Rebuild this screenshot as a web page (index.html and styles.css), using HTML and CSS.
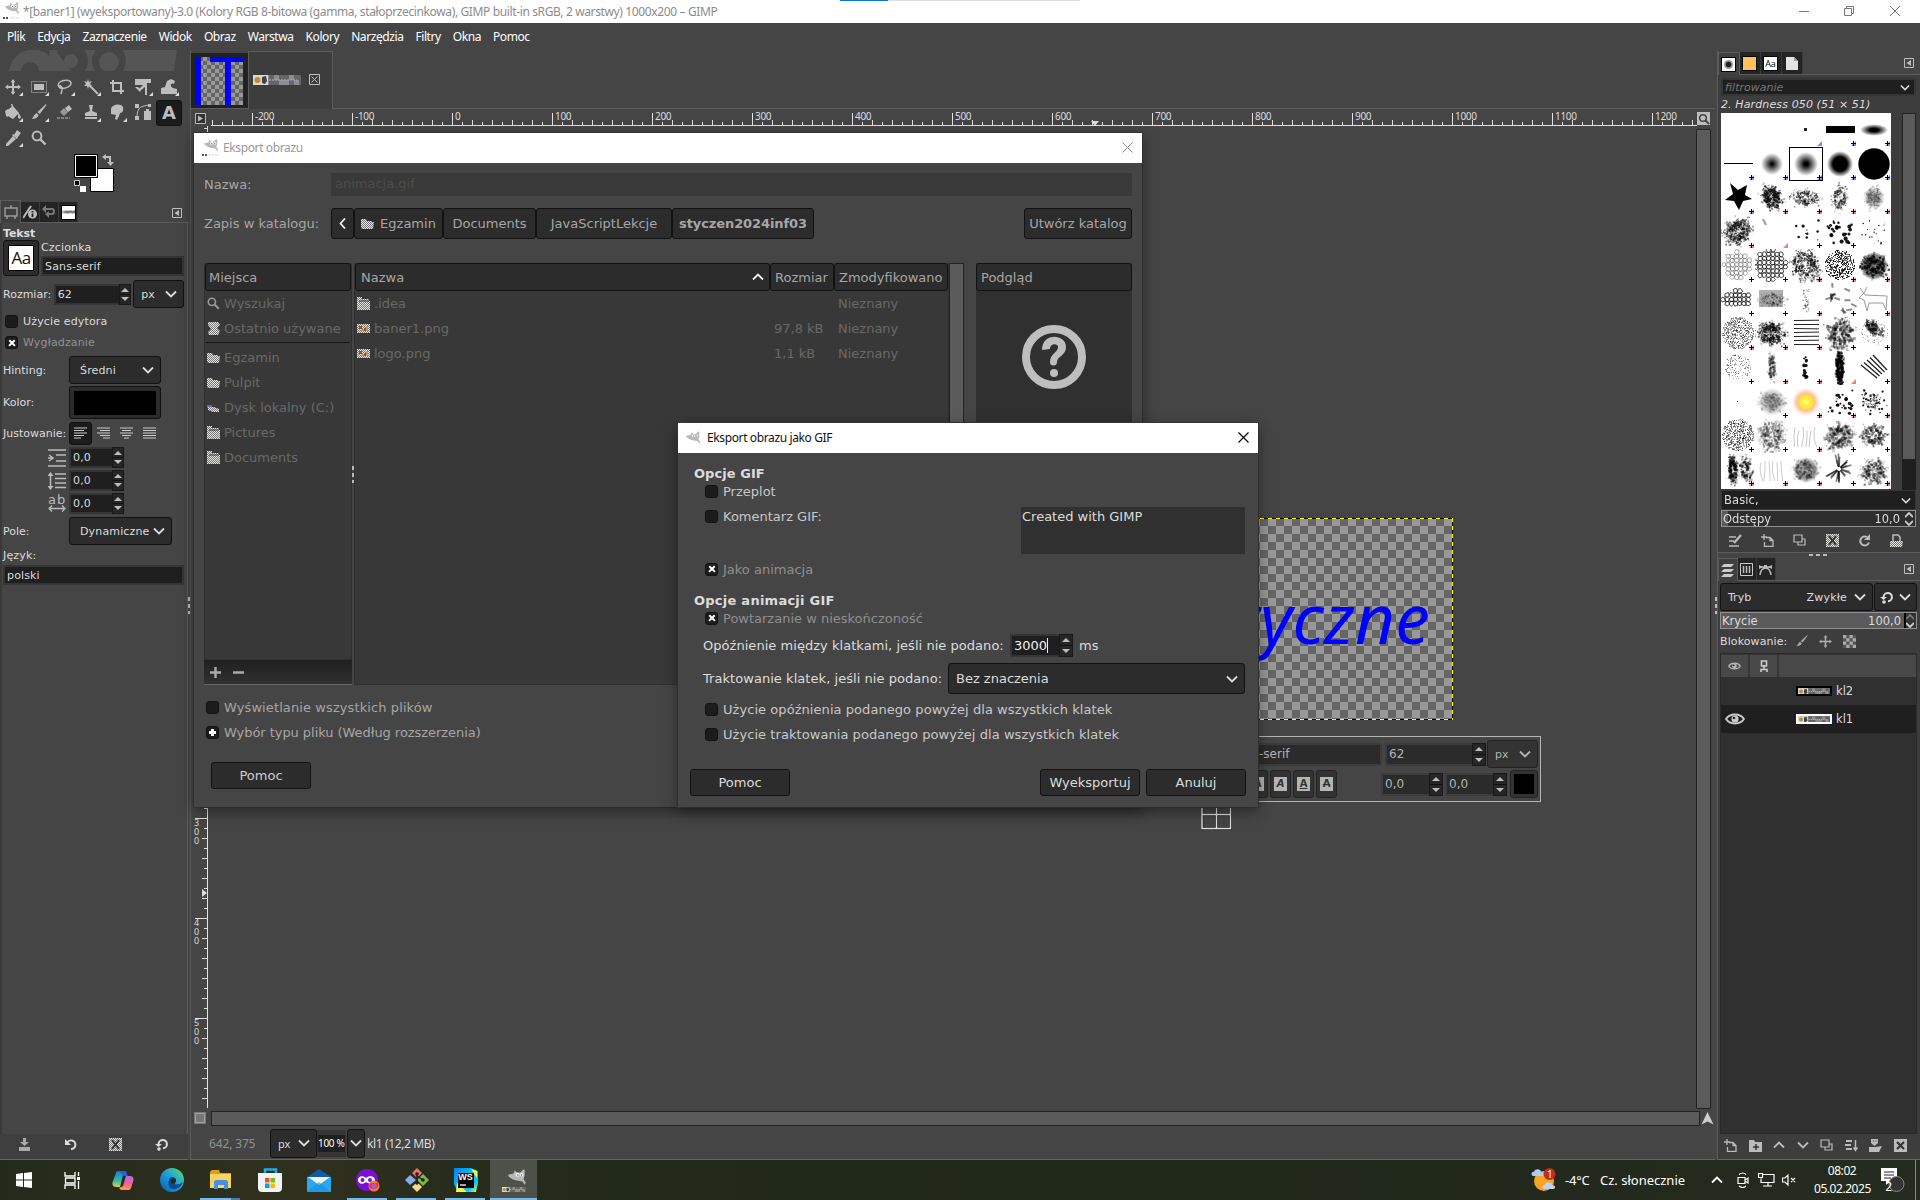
FILE: index.html
```html
<!DOCTYPE html>
<html lang="pl">
<head>
<meta charset="utf-8">
<title>GIMP</title>
<link rel="stylesheet" href="styles.css">
</head>
<body>
<svg class="defs" aria-hidden="true">
  <defs>
    <pattern id="dither" width="2" height="2" patternUnits="userSpaceOnUse"><rect width="2" height="2" fill="#777"/><rect width="1" height="1" fill="#e4e4e0"/><rect x="1" y="1" width="1" height="1" fill="#e4e4e0"/></pattern>
    <linearGradient id="gEdge" x1="0" y1="1" x2="1" y2="0"><stop offset="0" stop-color="#0c59a4"/><stop offset=".5" stop-color="#1b9de2"/><stop offset="1" stop-color="#5fe05a"/></linearGradient>
    <linearGradient id="gCopA" x1="0" y1="0" x2="0" y2="1"><stop offset="0" stop-color="#1a7be8"/><stop offset=".6" stop-color="#36b7a0"/><stop offset="1" stop-color="#d8d23c"/></linearGradient>
    <linearGradient id="gCopB" x1="0" y1="0" x2="0" y2="1"><stop offset="0" stop-color="#b668ee"/><stop offset=".55" stop-color="#f06292"/><stop offset="1" stop-color="#f8a04a"/></linearGradient>
    <linearGradient id="gWs" x1="0" y1="0" x2="1" y2="1"><stop offset="0" stop-color="#087cfa"/><stop offset=".5" stop-color="#00c8e8"/><stop offset=".75" stop-color="#07c3f2"/><stop offset="1" stop-color="#fcf84a"/></linearGradient>
  </defs>
  <symbol id="wilber" viewBox="0 0 18 15"><path fill="#b9b9b9" d="M0 5 5 4 6 1 8 3 11 3 14 0 15 1 15 6 14 9 16 12 15 14 13 11 7 10 4 9 1 7Z"/><circle cx="8.5" cy="5" r="1.7" fill="#fff"/><circle cx="12.3" cy="5" r="1.5" fill="#fff"/><circle cx="8.8" cy="5.2" r=".7" fill="#555"/><circle cx="12.2" cy="5.2" r=".7" fill="#555"/></symbol>
  <symbol id="chev" viewBox="0 0 12 8"><path d="M1 1.5 6 6.5 11 1.5" fill="none" stroke="currentColor" stroke-width="1.8"/></symbol>
  <symbol id="chevup" viewBox="0 0 12 8"><path d="M1 6.5 6 1.5 11 6.5" fill="none" stroke="currentColor" stroke-width="1.8"/></symbol>
  <symbol id="dockmenu" viewBox="0 0 10 10"><path d="M.5.5h9v9h-9z" fill="none" stroke="#bdbdbd"/><path d="M7 2v6L2.5 5z" fill="#bdbdbd"/></symbol>
  <symbol id="folder" viewBox="0 0 13 12"><path d="M0 1h5l1 2h5v1h2l-1 7H1L0 9z" fill="url(#dither)"/></symbol>
  <symbol id="folder2" viewBox="0 0 13 13"><path d="M0 0h5v2h7v2h1v9H0z" fill="url(#dither)"/><path d="M2 4h10" stroke="#3a3a3a"/></symbol>
  <symbol id="imgfile" viewBox="0 0 13 10"><path d="M0 0h13v9H0z" fill="url(#dither)"/><path d="M2 2h3v3H2zM7 4h3v3H7z" fill="#a34b32"/><path d="M9 2h2v5H9zM4 5h3v2H4z" fill="#c49a4a"/></symbol>
  <symbol id="lens" viewBox="0 0 16 16"><circle cx="6" cy="6" r="4.4" fill="none" stroke="currentColor" stroke-width="2"/><path d="m9.5 9.5 5 5" stroke="currentColor" stroke-width="2.4"/></symbol>
  <symbol id="move" viewBox="0 0 16 16"><path d="M8 0 5.6 3.2H7V7H3.2V5.6L0 8l3.2 2.4V9H7v3.8H5.6L8 16l2.4-3.2H9V9h3.8v1.4L16 8l-3.2-2.4V7H9V3.2h1.4z" fill="currentColor"/></symbol>
  <symbol id="brush" viewBox="0 0 16 16"><path d="M15 0 6.5 8l2.2 2L15.5 1zM5.6 9l2 2c-1 3-4 4-7 4 2-1.5 2.5-5 5-6z" fill="currentColor"/></symbol>
  <symbol id="newdoc" viewBox="0 0 13 13"><path d="M5 3.5h4l3 3v6H3.5V8M3 0v6M0 3h6M9 3.5v3h3" fill="none" stroke="currentColor" stroke-width="1.3"/></symbol>
  <symbol id="dup" viewBox="0 0 13 13"><path d="M1 1h8v7H1zM5 8v3h7V5H9" fill="none" stroke="currentColor" stroke-width="1.2"/></symbol>
  <symbol id="xbox" viewBox="0 0 13 13"><path d="M0 0h13v13H0z" fill="currentColor"/><path d="m3 3 7 7m0-7-7 7" stroke="#333" stroke-width="2.2"/></symbol>
  <symbol id="xdith" viewBox="0 0 13 13"><path d="M0 0h13v13H0z" fill="url(#dither)"/><path d="m3 2 7 9m0-9-7 9" stroke="#333" stroke-width="2"/></symbol>
  <symbol id="undo" viewBox="0 0 13 13"><path d="M3 5.5A4.300 4.300 0 1 1 7 11" fill="none" stroke="currentColor" stroke-width="2"/><path d="M1 1v6h6z" fill="currentColor"/></symbol>
  <symbol id="resetc" viewBox="0 0 13 13"><path d="M3.5 6A4.200 4.200 0 1 1 8 10.300" fill="none" stroke="currentColor" stroke-width="2"/><path d="M0 6h7L3.5 9z" fill="currentColor"/><circle cx="4" cy="11" r="1.8" fill="currentColor"/></symbol>
  <symbol id="eye" viewBox="0 0 20 12"><path d="M1 6C5 0 15 0 19 6 15 12 5 12 1 6z" fill="none" stroke="currentColor" stroke-width="1.8"/><circle cx="10" cy="6" r="3.6" fill="currentColor"/><circle cx="9" cy="5" r="1.3" fill="#222"/></symbol>
  <symbol id="thumb" viewBox="0 0 48 10"><path d="M0 0h48v10H0z" fill="#8d8d8d"/><path d="M16 0h5v5h5v5h5V5h-5V0h10v5h5v5h5V5h-5V0h7v5h0v5h-12V5h-5v5H16z" fill="#666"/><path d="M0 0h15v10H0z" fill="#dcd8d2"/><circle cx="4.5" cy="5" r="3" fill="#c58a2c"/><path d="m9 2 4-1 1 5-2 3-3-1z" fill="#3b4250"/><path d="M16 5h28" stroke="#b3aedb" stroke-width="1.2" stroke-dasharray="2 1"/></symbol>
</svg>

<header class="titlebar">
  <svg class="wil" viewBox="0 0 18 19"><use href="#wilber" width="16" height="13" x="2"/><path d="M0 15h2v2H0zM3 15h2v2H3z" fill="#555"/><path d="M7 16h10" stroke="#c9c9ea" stroke-dasharray="2 1"/></svg>
  <span class="wintitle">*[baner1] (wyeksportowany)-3.0 (Kolory RGB 8-bitowa (gamma, stałoprzecinkowa), GIMP built-in sRGB, 2 warstwy) 1000x200 – GIMP</span>
  <span class="topstrip"></span>
  <svg class="winctl" viewBox="0 0 104 12"><g fill="none" stroke="#777"><path d="M0 6.500h10M45.500 3.500h7v7h-7zM47.500 3.500v-2h7v7h-2M91 1l10 10M101 1 91 11"/></g></svg>
</header>
<nav class="menubar"><span>Plik</span><span>Edycja</span><span>Zaznaczenie</span><span>Widok</span><span>Obraz</span><span>Warstwa</span><span>Kolory</span><span>Narzędzia</span><span>Filtry</span><span>Okna</span><span>Pomoc</span></nav>

<main class="work">
  <aside class="left">
    <svg class="deco" viewBox="0 0 170 21"><g fill="#555"><path d="M0 21C3-6 44-9 46 21H30C30 10 14 8 12 21z"/><path d="M42 0h126l-3 21H68z"/></g><circle cx="62" cy="11" r="17" fill="#454545"/><circle cx="62" cy="11" r="7" fill="#555"/><path d="M46 0h-6l2 21h20z" fill="#555"/><circle cx="100" cy="11" r="17" fill="#454545"/><circle cx="100" cy="12" r="10" fill="#555"/></svg>
    <div class="tools">
      <i><svg viewBox="0 0 16 16"><use href="#move"/></svg></i>
      <i><svg viewBox="0 0 16 16"><path d="M.5 2.500h15v11H.5z" fill="none" stroke="currentColor" stroke-dasharray="1 1"/><path d="M3 5h10v6H3z" fill="currentColor"/></svg></i>
      <i><svg viewBox="0 0 16 16"><path d="M6 10C1 9 0 5 3 3c4-3 11-2 11 1 0 4-7 6-10 5-2-1-1-3 0-2 2 2 1 5 0 8" fill="none" stroke="currentColor" stroke-width="1.5"/></svg></i>
      <i><svg viewBox="0 0 16 16"><path d="m5 5 10 10" stroke="currentColor" stroke-width="2"/><path d="m5 0 1 3 3-1-2 3 2 2-3 0-1 3-1-3-3 0 2-2-2-3 3 1z" fill="currentColor"/></svg></i>
      <i class="nc"><svg viewBox="0 0 16 16"><path d="M4 1v11h11M1 4h11v11" fill="none" stroke="currentColor" stroke-width="2"/></svg></i>
      <i><svg viewBox="0 0 16 16"><path d="M0 0h16v4h-4v12h-2V8l-5 4-1-2 4-4H0zM0 8h3l3 3-1 2z" fill="currentColor"/></svg></i>
      <i><svg viewBox="0 0 16 16"><path d="M0 15V9l4-1 2-6 4-2 4 2-1 3c-4-2-4 3-1 4l4 1v5z" fill="currentColor"/></svg></i>
      <i><svg viewBox="0 0 16 16"><path d="m1 7 7-5 6 7-6 6-5-3zM13 8l3 5-1 2-2-1zM6 0h1.500l1 5H7zM0 7l3-2v8L1 12z" fill="currentColor"/></svg></i>
      <i><svg viewBox="0 0 16 16"><use href="#brush"/></svg></i>
      <i class="nc"><svg viewBox="0 0 16 16"><path d="m3 8 4-4 4 4-4 4z" fill="#999"/><path d="m8 4 4-3 3 4-4 3z" fill="currentColor"/><path d="M0 14h13" stroke="currentColor" stroke-dasharray="3 1"/></svg></i>
      <i><svg viewBox="0 0 16 16"><path d="M6 1h4l-1 6 5 2v3H2V9l5-2zM2 13h12v2H2z" fill="currentColor"/></svg></i>
      <i><svg viewBox="0 0 16 16"><path d="M2 5c1-5 10-6 12-2 1 4-1 6-3 6l-1 3-2 4-2-1 1-4-5-1z" fill="currentColor"/></svg></i>
      <i class="nc"><svg viewBox="0 0 16 16"><path d="M2 15C2 8 3 3 9 2l5-1" fill="none" stroke="currentColor"/><path d="M0 0h4v4H0zM0 12h4v4H0zM13 0h3v3h-3zM9 7h7v9H9zM11 5h3v2h-3z" fill="currentColor"/></svg></i>
      <i class="nc sel"><b>A</b></i>
      <i><svg viewBox="0 0 16 16"><path d="m12 0 4 3-4 5-3-3zM8 4l5 4-1 1-5-4zM8 6l3 3-8 7H1v-2z" fill="currentColor"/></svg></i>
      <i class="nc"><svg viewBox="0 0 16 16"><use href="#lens"/></svg></i>
    </div>
    <svg class="colors" viewBox="0 0 42 40"><path d="M16.500 14.500h23v23h-23z" fill="#fff" stroke="#000"/><path d="M.5.5h23v23H.5z" fill="#000" stroke="#000"/><path d="M1.500 1.500h21v21h-21z" fill="none" stroke="#fff"/><path d="M30 3h6v7" fill="none" stroke="#bdbdbd" stroke-width="2"/><path d="m28 3 4-3v6zM33 8h7l-3.500 4z" fill="#bdbdbd"/><path d="M6 32h6v6H6z" fill="#fff"/><path d="M.5 26.500h5v5h-5z" fill="#000" stroke="#ccc"/></svg>
    <div class="tabs ltabs">
      <i class="on"><svg width="14" height="14" viewBox="0 0 14 14"><path d="M1 3h12v8H1zM3 11v3M11 11v3M7 0v3" fill="none" stroke="#999" stroke-width="1.5"/></svg></i>
      <i><svg width="14" height="14" viewBox="0 0 14 14"><path d="m0 13 8-12" stroke="#bbb" stroke-width="2"/><circle cx="9.5" cy="9" r="4.5" fill="#bbb"/><path d="M9.500 6v1.500m0 1V12" stroke="#222" stroke-width="1.8"/></svg></i>
      <i><svg width="14" height="14" viewBox="0 0 14 14"><path d="M3 4h7q2 0 2 2.500T10 9H6" fill="none" stroke="#777" stroke-width="2"/><path d="m0 4 4-4v8zM3 9l4-3v7z" fill="#777"/></svg></i>
      <i><b class="sw"><svg width="13" height="4"><use href="#thumb" width="13" height="4"/></svg></b></i>
      <svg class="dm" width="10" height="10"><use href="#dockmenu"/></svg>
    </div>
    <section class="topts">
      <div class="tt">Tekst</div>
      <div class="fontrow"><span class="btn fontbtn"><b>Aa</b></span><div class="fcol"><span>Czcionka</span><span class="entry">Sans-serif</span></div></div>
      <div class="r r1"><span class="lab">Rozmiar:</span><span class="spin w78">62<i></i></span><span class="btn combo px">px<svg class="cv"><use href="#chev"/></svg></span></div>
      <div class="ck"><i></i>Użycie edytora</div>
      <div class="ck dim"><i class="x"></i>Wygładzanie</div>
      <div class="r r2"><span class="lab l66">Hinting:</span><span class="btn combo c92">Średni<svg class="cv"><use href="#chev"/></svg></span></div>
      <div class="r r3"><span class="lab l66">Kolor:</span><span class="btn colorbtn"><b></b></span></div>
      <div class="r r4"><span class="lab l66">Justowanie:</span>
        <span class="btn jb"><svg width="13" height="12"><path d="M0 1h13M0 3.500h10M0 6h13M0 8.500h10M0 11h7" stroke="#ccc"/></svg></span>
        <span class="ji"><svg width="13" height="12"><path d="M0 1h13M3 3.500h10M0 6h13M3 8.500h10M6 11h7" stroke="#ccc"/></svg><svg width="13" height="12"><path d="M0 1h13M2 3.500h9M0 6h13M2 8.500h9M4 11h5" stroke="#ccc"/></svg><svg width="13" height="12"><path d="M0 1h13M0 3.500h13M0 6h13M0 8.500h13M0 11h13" stroke="#ccc"/></svg></span></div>
      <div class="r r5"><svg class="pi" viewBox="0 0 18 18"><path d="M0 1h18M8 6h10M8 12h10M0 17h18" stroke="#bbb" stroke-width="1.5"/><path d="m1 6 4 3-4 3M0 9h4" fill="none" stroke="#bbb" stroke-width="1.5"/></svg><span class="spin w55">0,0<i></i></span></div>
      <div class="r r5"><svg class="pi" viewBox="0 0 18 18"><path d="M7 2h11M7 6.500h11M7 11h11M7 15.500h11M2.500 2v14" stroke="#bbb" stroke-width="1.5"/><path d="m2.500 0 3 4h-6zM2.500 18l3-4h-6z" fill="#bbb"/></svg><span class="spin w55">0,0<i></i></span></div>
      <div class="r r5"><span class="pi ab">ab<svg width="18" height="7"><path d="M2 3.500h14M4 .5l-3 3 3 3M14 .5l3 3-3 3" fill="none" stroke="#bbb" stroke-width="1.3"/></svg></span><span class="spin w55">0,0<i></i></span></div>
      <div class="r r6"><span class="lab l66">Pole:</span><span class="btn combo c103">Dynamiczne<svg class="cv"><use href="#chev"/></svg></span></div>
      <div class="lang">Język:</div>
      <span class="entry pol">polski</span>
    </section>
    <div class="lbar"><svg width="13" height="13"><path d="M5 0h3v4h3L6.500 8 2 4h3zM1 9h11v4H1z" fill="#aaa"/></svg><svg width="13" height="13"><use href="#undo"/></svg><svg width="13" height="13"><use href="#xdith"/></svg><svg width="13" height="13"><use href="#resetc"/></svg></div>
  </aside>
  <div class="gut"><i class="vdots"></i></div>

  <section class="center">
    <div class="imgtabs">
      <div class="itab"><svg width="48" height="48" viewBox="0 0 48 48"><defs><pattern id="chk" width="8" height="8" patternUnits="userSpaceOnUse"><path d="M4 0h4v4H4zM0 4h4v4H0z" fill="#666"/></pattern></defs><rect width="48" height="48" fill="#999"/><rect width="48" height="48" fill="url(#chk)"/><path d="M0 0h6v48H0zM15 0h33v5H36v43h-6V5H15z" fill="#00f"/></svg></div>
      <div class="itab act"><svg width="48" height="10"><use href="#thumb"/></svg><svg width="11" height="11"><path d="M.5.5h10v10H.5zM2.500 2.500l6 6m0-6-6 6" fill="none" stroke="#bdbdbd"/></svg></div>
    </div>
    <div class="rulerrow"><svg class="rcorner" width="11" height="11"><path d="M.5.5h10v10H.5z" fill="#333" stroke="#bbb"/><path d="M3 2.500v6l5-3z" fill="#bbb"/></svg>
      <div class="hruler"><span>-200</span><span>-100</span><span>0</span><span>100</span><span>200</span><span>300</span><span>400</span><span>500</span><span>600</span><span>700</span><span>800</span><span>900</span><span>1000</span><span>1100</span><span>1200</span><svg class="hmark" width="8" height="5"><path d="M0 0h8L4 5z" fill="#ddd"/></svg></div>
      <svg class="zi" viewBox="0 0 13 13"><path d="M0 0h13v13H0z" fill="#bdbdbd"/><circle cx="6" cy="6" r="3.3" fill="none" stroke="#444" stroke-width="1.5"/><path d="m8 8 4 4" stroke="#444" stroke-width="2"/></svg></div>
    <div class="viewrow">
      <div class="vruler"><span>3<br>0<br>0</span><span>4<br>0<br>0</span><span>5<br>0<br>0</span><svg class="vmark" width="5" height="8"><path d="M0 0v8l5-4z" fill="#ddd"/></svg></div>
      <div class="canvas">
        <div class="layer"><span>tyczne</span></div>
        <div class="textbox">
          <div class="tb1"><span class="entry te">-serif</span><span class="spin ts1">62<i></i></span><span class="btn combo tpx">px<svg class="cv"><use href="#chev"/></svg></span></div>
          <div class="tb2"><span class="btn ab1"><b>A</b></span><span class="btn ab1"><b class="it">A</b></span><span class="btn ab1"><b class="un">A</b></span><span class="btn ab1"><b class="st">A</b></span><span class="spin ts2 first">0,0<i></i></span><span class="spin ts2">0,0<i></i></span><span class="btn tcol"><b></b></span></div>
        </div>
        <svg class="cross" width="31" height="30"><path d="M1 0v28.500h28.500V0M15.500 0v28M1 14.500h28" fill="none" stroke="#222" stroke-width="3"/><path d="M1 0v28.500h28.500V0M15.500 0v28M1 14.500h28" fill="none" stroke="#e0e0e0" stroke-width="1.4"/></svg>
      </div>
      <div class="vscroll"><i></i></div>
    </div>
    <div class="hrow"><svg width="12" height="12"><path d="M0 0h12v12H0z" fill="#777"/><path d="M1.500 1.500h9v9h-9z" fill="none" stroke="#ccc" stroke-dasharray="1 1"/></svg><div class="hscroll"></div><svg class="nav" width="13" height="13"><path d="m6.500 0 6 12.500-6-3-6 3z" fill="#ccc"/></svg></div>
    <div class="status"><span class="pos">642, 375</span><span class="btn combo s1">px<svg class="cv"><use href="#chev"/></svg></span><span class="entry s2">100 %</span><span class="btn s3"><svg class="cv"><use href="#chev"/></svg></span><span class="s4">kl1 (12,2 MB)</span></div>
  </section>

  <div class="gut g2"><i class="vdots"></i></div>
  <aside class="right">
    <div class="tabs rtabs">
      <i class="on"><b class="sw"><svg width="13" height="13"><circle cx="6.5" cy="6.5" r="4.5" fill="#999"/><circle cx="6.5" cy="6.5" r="2.8" fill="#222"/></svg></b></i><i><b class="sw pat"></b></i><i><b class="sw aa">Aa</b></i><i><svg width="12" height="13"><path d="M0 0h8l4 4v9H0z" fill="#e4e4e4"/><path d="M8 0v4h4" fill="#999"/></svg></i>
      <svg class="dm" width="10" height="10"><use href="#dockmenu"/></svg>
    </div>
    <section class="brushes">
      <div class="entry filt"><em>filtrowanie</em><svg class="cv"><use href="#chev"/></svg></div>
      <div class="bname">2. Hardness 050 (51 × 51)</div>
      <div class="brow"><div class="grid" id="grid"></div><div class="bscroll"><i></i></div></div>
      <div class="entry basic">Basic,<svg class="cv"><use href="#chev"/></svg></div>
      <div class="slider od"><span>Odstępy</span><span class="v">10,0</span><svg width="8" height="14"><path d="m0 5 4-4 4 4M0 9l4 4 4-4" fill="none" stroke="#ccc" stroke-width="1.8"/></svg></div>
      <div class="bicons"><svg width="13" height="13"><path d="M0 3h7M0 7h5M0 12h10" stroke="#bbb" stroke-width="1.5"/><path d="m5 9 7-8" stroke="#bbb" stroke-width="2.4"/></svg><svg width="13" height="13"><use href="#newdoc"/></svg><svg width="13" height="13"><use href="#dup"/></svg><svg width="13" height="13"><use href="#xdith"/></svg><svg width="13" height="13"><path d="M11 8.500A4.500 4.500 0 1 1 9 3" fill="none" stroke="#bbb" stroke-width="2"/><path d="M12 0v6H6z" fill="#bbb"/></svg><svg width="13" height="13"><path d="M0 7h13l-1 6H0z" fill="url(#dither)"/><path d="M3 7V1h5l2 2v4" fill="none" stroke="#bbb" stroke-width="1.5"/></svg></div>
    </section>
    <div class="hdots"></div>
    <div class="tabs rtabs2">
      <i class="on"><svg width="13" height="13"><path d="M3 0h10l-3 3H0zM3 5h10l-3 3H0zM3 10h10l-3 3H0z" fill="#ccc"/></svg></i><i><svg width="13" height="13"><path d="M.5.5h12v12H.5z" fill="none" stroke="#ccc"/><path d="M3.500 3v7M6.500 3v7M9.500 3v7" stroke="#bbb" stroke-width="1.5"/></svg></i><i><svg width="13" height="13"><path d="M0 4h13M1 12Q2 5 6.500 5T12 12" fill="none" stroke="#bbb" stroke-width="1.5"/><path d="M0 2l4 2-4 2zM5 2h3v4H5zM13 2 9 4l4 2z" fill="#bbb"/></svg></i>
      <svg class="dm" width="10" height="10"><use href="#dockmenu"/></svg>
    </div>
    <section class="layers">
      <div class="mode"><span class="btn combo m1">Tryb<em>Zwykłe</em><svg class="cv"><use href="#chev"/></svg></span><span class="btn m2"><svg width="13" height="13"><use href="#resetc"/></svg><svg class="cv"><use href="#chev"/></svg></span></div>
      <div class="slider kr"><span>Krycie</span><span class="v">100,0</span><svg width="8" height="14"><path d="m0 5 4-4 4 4" fill="none" stroke="#777" stroke-width="1.8"/><path d="m0 9 4 4 4-4" fill="none" stroke="#ccc" stroke-width="1.8"/></svg></div>
      <div class="lock">Blokowanie:<svg width="12" height="12"><use href="#brush"/></svg><svg width="13" height="13"><use href="#move"/></svg><svg width="13" height="13" viewBox="0 0 12 12"><path d="M0 0h12v12H0z" fill="#aaa"/><path d="M3 0h3v3H3zM9 0h3v3H9zM0 3h3v3H0zM6 3h3v3H6zM3 6h3v3H3zM9 6h3v3H9zM0 9h3v3H0zM6 9h3v3H6z" fill="#555"/></svg></div>
      <div class="llist">
        <div class="lhead"><i><svg width="13" height="8"><use href="#eye"/></svg></i><i><svg width="8" height="13"><path d="M1.500 1h5v5h-5zM4 5v4M1 12V9.500h6V12" fill="none" stroke="#ccc" stroke-width="1.6"/></svg></i><i></i></div>
        <div class="lrow"><i></i><span class="th k"><svg width="32" height="6"><use href="#thumb" width="32" height="7"/></svg></span>kl2</div>
        <div class="lrow sel"><i><svg width="20" height="12"><use href="#eye"/></svg></i><span class="th"><svg width="32" height="6"><use href="#thumb" width="32" height="7"/></svg></span>kl1</div>
      </div>
      <div class="licons"><svg width="13" height="13"><use href="#newdoc"/></svg><svg width="13" height="13"><path d="M0 1h5l1 2h7v10H0z" fill="#bbb"/><path d="M7 5v6M4 8h6" stroke="#333" stroke-width="1.5"/></svg><svg width="12" height="8"><use href="#chevup"/></svg><svg width="12" height="8"><use href="#chev"/></svg><svg width="13" height="13"><use href="#dup"/></svg><svg width="13" height="13"><path d="M1 2h6M0 6h6M1 10h6" stroke="#bbb" stroke-width="2"/><path d="M10.500 1v10M8.500 8.500l2 3 2-3" fill="none" stroke="#bbb" stroke-width="1.5"/></svg><svg width="13" height="13"><path d="M2 0h7v4L5.500 7 2 4z" fill="#bbb"/><path d="M0 8h7l6-1-3 6H0z" fill="#bbb"/><path d="M4 2h1M6.500 2h1" stroke="#333"/></svg><svg width="13" height="13"><use href="#xbox"/></svg></div>
    </section>
  </aside>
</main>

<footer class="taskbar">
  <i class="t50"><svg width="16" height="16"><path d="m0 2 7-1v6.500H0zM8 1l8-1v7.500H8zM0 8.500h7V15l-7-1zM8 8.500h8V16l-8-1z" fill="#fff"/></svg></i>
  <i class="t48"><svg width="17" height="17"><path d="M1 0v4h10V0M1 17v-4h10v4M1.500 6h9.500v5H1.500zM14.500 0v4M14.500 9v8" fill="none" stroke="#fff" stroke-width="1.3"/><path d="M13 5h3v3h-3z" fill="#fff"/></svg></i>
  <i><svg width="22" height="21"><path d="M6 1h7l2 2-4 2-3 12H4c-4 0-4-4-3-6L4 3c0-1 1-2 2-2z" fill="url(#gCopA)"/><path d="M16 6h3c3 1 3 4 2 6l-2 6c-1 2-2 2-3 2H9L7 18l4-2 3-10z" fill="url(#gCopB)"/><path d="M6 1h7l3 5h-4z" fill="#1769d8"/></svg></i>
  <i><svg width="24" height="24"><circle cx="12" cy="12" r="12" fill="url(#gEdge)"/><path d="M9 12c0-4 7-4 7 0 0 3-2 3-1 4 2 1 6 0 8-2-2 6-8 8-11 7-4-2-4-6-3-9z" fill="#0b4a92"/><path d="M11 12c1-2 5-2 5 0 0 3-2 3-1 4-4-1-5-2-4-4z" fill="#23281b"/></svg></i>
  <i class="run two"><svg width="22" height="20"><path d="M0 2 2 0h7l1 3h11v5H0z" fill="#e29b1c"/><path d="M0 4h21v14H0z" fill="#fcd35c"/><path d="M4 12c0-1 1-2 2-2h10c1 0 2 1 2 2v7h-4v-4H8v4H4z" fill="#4394dc"/></svg></i>
  <i><svg width="24" height="24"><path d="M7 6V1.500h11V6" fill="none" stroke="#24a9e8" stroke-width="2.5"/><path d="M0 5h24v15q0 4-4 4H4q-4 0-4-4z" fill="#f1f3f4"/><path d="M7 10h4.500v4.500H7z" fill="#f25022"/><path d="M12.500 10H17v4.500h-4.500z" fill="#7fba00"/><path d="M7 15.500h4.500V20H7z" fill="#00a4ef"/><path d="M12.500 15.500H17V20h-4.500z" fill="#ffb900"/></svg></i>
  <i><svg width="24" height="23"><path d="M0 8 12 0l12 8v3H0z" fill="#0a5ea8"/><path d="M0 8h24v15H0z" fill="#2ba8ee"/><path d="M1 8h22l-11 8z" fill="#f4f4f4"/><path d="m0 22 12-9 12 10H0z" fill="#1c8fe0" opacity=".6"/></svg></i>
  <i class="run"><svg width="24" height="24"><circle cx="11" cy="12" r="11" fill="#7a0fd6"/><path d="M2 12c0-4 5-5 8-2 3-3 9-2 9 2s-5 5-9 2c-3 3-8 2-8-2z" fill="#fff"/><circle cx="6.5" cy="12" r="2" fill="#7a0fd6"/><circle cx="14" cy="12" r="2" fill="#7a0fd6"/><circle cx="18" cy="18" r="5.5" fill="#ff7a2a"/><path d="M13 17c3-4 5 0 9-3 1 3 0 7-4 7s-5-2-5-4z" fill="#f4313f"/><circle cx="18" cy="18" r="2.5" fill="#9c5cf0"/></svg></i>
  <i class="run"><svg width="24" height="24"><path d="m12 0 5 5-5 5-5-5z" fill="#f0716f"/><path d="m5 7 6 5-6 5-5-5z" fill="#84aef0"/><path d="m12 14 5 5-5 5-5-5z" fill="#f5dc7c"/><path d="m18 6 6 6-6 6-6-6z" fill="#7cb84c"/><path d="M12 5v11M12 8l6 4" stroke="#222" stroke-width="1.5"/><circle cx="12" cy="6" r="1.8" fill="#222"/><circle cx="12" cy="15" r="1.8" fill="#222"/><circle cx="18" cy="12" r="1.8" fill="#222"/></svg></i>
  <i class="run ws"><svg width="24" height="24"><path d="M0 0h17l7 3v12l-2 9H4L0 16z" fill="url(#gWs)"/><path d="m2 24 1-9 10 9zM17 1l6 2v7z" fill="#fcf84a"/><path d="M4 5h16v15H4z" fill="#000"/><path d="M6 17h6" stroke="#fff" stroke-width="1.3"/></svg><b>WS</b></i>
  <i class="run actv"><svg width="26" height="23" viewBox="0 0 26 23"><use href="#wilber" x="6" width="20" height="17"/><use href="#thumb" y="18" width="24" height="5"/></svg></i>
  <div class="tray">
    <svg width="26" height="24"><circle cx="13" cy="13" r="10" fill="#f7a325"/><path d="M2 8c-3-1-1-5 1-4 1-4 7-3 7 0 4 0 4 4 1 4z" fill="#aecdf5"/><path d="M13 21c-3-1-1-5 1-4 1-4 7-3 7 0 4 0 4 4 1 4z" fill="#b9d4f7"/><circle cx="18.5" cy="6" r="6" fill="#c42b1c"/></svg><b class="one">1</b>
    <span class="temp">-4°C</span><span class="desc">Cz. słonecznie</span>
    <svg class="tchev" width="12" height="8"><use href="#chevup"/></svg>
    <svg class="tcam" width="12" height="16"><path d="M1 5.500h7v6H1zM8 8l3-2v5L8 9M2 2.500q4-3 7 0M2 14q4 3 7 0" fill="none" stroke="#fff" stroke-width="1.2"/></svg>
    <svg class="tnet" width="17" height="14"><path d="M5 1.500h11v8H3v-4M10 9.500V13M5 13h9M.5.5h4v4h-4z" fill="none" stroke="#fff" stroke-width="1.2"/></svg>
    <svg class="tvol" width="15" height="12"><path d="M.5 4h2.500l3-3v10L3 8H.5zM9 4l4 4M13 4 9 8" fill="none" stroke="#fff" stroke-width="1.2"/></svg>
    <div class="clock">08:02<br>05.02.2025</div>
    <svg class="tnot" width="26" height="25"><path d="M0 0h16v13H9l-4 4v-4H0z" fill="#fff"/><path d="M3 4h10M3 7h10M3 10h7" stroke="#222"/><circle cx="15.5" cy="16" r="7.5" fill="#333" stroke="#888"/></svg><b class="cnt">2</b>
    <span class="peek"></span>
  </div>
</footer>

<div class="dlg d1">
  <div class="dtitle"><svg class="wil" viewBox="0 0 18 19"><use href="#wilber" width="16" height="13" x="2"/><path d="M0 15h2v2H0zM3 15h2v2H3z" fill="#555"/><path d="M7 16h10" stroke="#c9c9ea" stroke-dasharray="2 1"/></svg><span>Eksport obrazu</span><svg class="x" width="11" height="11"><path d="m.5.5 10 10m0-10-10 10" stroke="#888"/></svg></div>
  <div class="dbody">
    <div class="nrow"><label>Nazwa:</label><span class="name">animacja.gif</span></div>
    <div class="prow"><label>Zapis w katalogu:</label><span class="btn p0"><svg width="7" height="11"><path d="M6 .5 1.500 5.500 6 10.500" fill="none" stroke="#eee" stroke-width="1.8"/></svg></span><span class="btn p1"><svg width="13" height="12"><use href="#folder"/></svg>Egzamin</span><span class="btn p2">Documents</span><span class="btn p3">JavaScriptLekcje</span><span class="btn p4">styczen2024inf03</span><span class="btn p5">Utwórz katalog</span></div>
    <div class="lists">
      <div class="placescol"><div class="places"><div class="btn th0">Miejsca</div>
        <div class="fr"><svg width="13" height="13"><use href="#lens"/></svg>Wyszukaj</div>
        <div class="fr"><svg width="13" height="13"><path d="M1 0h10l2 3-3 3 3 3-2 4H2l-1-3 3-3-3-4z" fill="url(#dither)"/></svg>Ostatnio używane</div>
        <hr>
        <div class="fr"><svg width="13" height="12"><use href="#folder"/></svg>Egzamin</div>
        <div class="fr"><svg width="13" height="12"><use href="#folder"/></svg>Pulpit</div>
        <div class="fr"><svg width="13" height="12"><path d="M0 3h5v3H0z" fill="#3d7d9c"/><path d="M1 5h6l5 2v3H6L1 8z" fill="url(#dither)"/></svg>Dysk lokalny (C:)</div>
        <div class="fr"><svg width="13" height="13"><use href="#folder2"/></svg>Pictures</div>
        <div class="fr"><svg width="13" height="13"><use href="#folder2"/></svg>Documents</div>
      </div><div class="pm"><svg width="34" height="11"><path d="M5.500 0v11M0 5.500h11M23 5.500h11" stroke="#aaa" stroke-width="2.4"/></svg></div></div>
      <div class="pane"><i class="vdots"></i></div>
      <div class="files"><div class="fh"><span class="btn h1">Nazwa<svg class="cv"><use href="#chevup"/></svg></span><span class="btn h2">Rozmiar</span><span class="btn h3">Zmodyfikowano</span></div>
        <div class="fr f"><svg width="13" height="13"><use href="#folder2"/></svg><span class="n">.idea</span><span class="s"></span><span>Nieznany</span></div>
        <div class="fr f"><svg width="13" height="10"><use href="#imgfile"/></svg><span class="n">baner1.png</span><span class="s">97,8 kB</span><span>Nieznany</span></div>
        <div class="fr f"><svg width="13" height="10"><use href="#imgfile"/></svg><span class="n">logo.png</span><span class="s">1,1 kB</span><span>Nieznany</span></div>
      </div><div class="fscroll"></div>
      <div class="preview"><div class="btn th0">Podgląd</div><svg width="64" height="64"><circle cx="32" cy="32" r="28" fill="none" stroke="#bebebe" stroke-width="8"/><path d="M20 25c0-18 24-16 24-3 0 9-9 9-9 15a3.500 3.500 0 0 1-7 0c0-9 8-9 8-15 0-4-8-4-8 2z" fill="#bebebe"/><circle cx="32" cy="48" r="4" fill="#bebebe"/></svg></div>
    </div>
    <div class="ck c1"><i></i>Wyświetlanie wszystkich plików</div>
    <div class="ck c2"><i class="plus"></i>Wybór typu pliku (Według rozszerzenia)</div>
    <span class="btn help">Pomoc</span>
  </div>
</div>

<div class="dlg d2">
  <div class="dtitle"><svg class="wil" viewBox="0 0 18 19"><use href="#wilber" width="16" height="14" y="2"/></svg><span>Eksport obrazu jako GIF</span><svg class="x" width="11" height="11"><path d="m.5.5 10 10m0-10-10 10" stroke="#000" stroke-width="1.1"/></svg></div>
  <div class="gbody">
    <h4>Opcje GIF</h4>
    <div class="ck g"><i></i>Przeplot</div>
    <div class="comm"><div class="ck g"><i></i>Komentarz GIF:</div><div class="tview">Created with GIMP</div></div>
    <div class="ck g dim"><i class="x"></i>Jako animacja</div>
    <h4 class="h2nd">Opcje animacji GIF</h4>
    <div class="ck g dim"><i class="x"></i>Powtarzanie w nieskończoność</div>
    <div class="drow dr1"><span class="dl1">Opóźnienie między klatkami, jeśli nie podano:</span><span class="spin ds">3000<b></b><i></i></span><span class="ms">ms</span></div>
    <div class="drow dr2"><span class="dl2">Traktowanie klatek, jeśli nie podano:</span><span class="btn combo dcombo">Bez znaczenia<svg class="cv"><use href="#chev"/></svg></span></div>
    <div class="ck g u1"><i></i>Użycie opóźnienia podanego powyżej dla wszystkich klatek</div>
    <div class="ck g u2"><i></i>Użycie traktowania podanego powyżej dla wszystkich klatek</div>
    <div class="dbtns"><span class="btn">Pomoc</span><span class="btn">Wyeksportuj</span><span class="btn">Anuluj</span></div>
  </div>
</div>
<script src="script.js"></script>
</body>
</html>
```
FILE: styles.css
```css
*{box-sizing:border-box}
body{margin:0;width:1920px;height:1200px;overflow:hidden;background:#454545;color:#dcdcdc;font:11px "DejaVu Sans",sans-serif;display:flex;flex-direction:column;position:relative}
i,em{font-style:normal}
svg{display:block;flex:none}
.defs{position:absolute;width:0;height:0}
.titlebar{height:23px;background:#fff;display:flex;align-items:center;padding-left:3px;font:12px "Noto Sans",sans-serif;color:#8c8c8c;flex:none;position:relative}
.wil{width:18px;height:19px}
.wintitle{margin-left:2px;letter-spacing:-.37px;white-space:nowrap}
.topstrip{position:absolute;left:840px;top:0;width:240px;height:1px;background:linear-gradient(90deg,#0a78d4 48px,#ddd 48px)}
.winctl{width:104px;height:12px;margin-left:auto;margin-right:17px;margin-bottom:2px}
.menubar{height:27px;flex:none;display:flex;align-items:center;padding-left:7px;gap:12px;font:12px "Noto Sans",sans-serif;color:#fff;letter-spacing:-.42px}
.work{height:1110px;flex:none;display:flex}
.btn{display:flex;align-items:center;justify-content:center;background:#2c2c2c;border:1px solid #121212;border-radius:3px}
.combo{justify-content:flex-start;padding:0 6px 0 7px}
.combo .cv{margin-left:auto}
.cv{width:12px;height:8px}
.entry{display:flex;align-items:center;background:#1f1f1f;border:2px solid #353535;padding-left:2px}
.spin{display:flex;align-items:center;background:#1f1f1f;border:2px solid #353535;border-right:0;padding-left:2px;position:relative;height:21px}
.spin>i{position:absolute;right:0;top:-2px;bottom:-2px;width:12px;background:linear-gradient(#262626 0 47%,#111 47% 53%,#262626 53%);border:1px solid #181818}
.spin>i:before,.spin>i:after{content:"";position:absolute;left:calc(50% - 4px);border:4px solid transparent}
.spin>i:before{top:-1px;border-bottom:4px solid #bdbdbd}
.spin>i:after{bottom:-1px;border-top:4px solid #bdbdbd}
.ck{display:flex;align-items:center}
.ck i{width:13px;height:13px;background:#1c1c1c;border:1px solid #131313;border-radius:3px;margin-right:5px;flex:none;position:relative}
.ck i.x:before,.ck i.x:after,.ck i.plus:before,.ck i.plus:after{content:"";position:absolute;left:1.5px;top:4.3px;width:8px;height:2.4px;background:#fff;transform:rotate(45deg)}
.ck i.x:after{transform:rotate(-45deg)}
.ck i.plus:before{transform:none;left:2px;width:7px;height:3px;top:4px}
.ck i.plus:after{transform:rotate(90deg);left:2px;width:7px;height:3px;top:4px}
.dim{color:#929292}

.left{width:188px;display:flex;flex-direction:column;color:#dcdcdc}
.deco{width:170px;height:21px;margin-left:9px;flex:none}
.tools{display:grid;grid-template-columns:repeat(7,26px);grid-auto-rows:25.5px;padding-top:3px;height:81px;color:#bdbdbd}
.tools i{display:flex;align-items:center;justify-content:center;position:relative;height:25px}
.tools svg{width:16px;height:16px}
.tools i:not(.nc):after{content:"";position:absolute;right:3px;bottom:3px;border:2px solid transparent;border-right-color:#ddd;border-bottom-color:#ddd}
.tools .sel{background:#1c1c1c;border:1px solid #111;border-radius:3px;height:26px}
.tools b{font-size:18px;line-height:20px}
.colors{width:42px;height:40px;margin:3px 0 0 74px}
.tabs{display:flex;position:relative;border-bottom:1px solid #5c5c5c;flex:none}
.tabs i{width:19px;background:#242424;border-right:1px solid #3a3a3a;display:flex;align-items:center;justify-content:center}
.tabs .on{background:#3f3f3f;border:1px solid #5c5c5c;border-bottom:0;width:21px;margin-bottom:-1px;margin-top:-2px}
.dm{margin-left:auto}
.sw{display:flex;align-items:center;justify-content:center;width:15px;height:15px;background:#fff;border:1px solid #000;color:#000}
.ltabs{height:21px;margin-top:8px;width:188px}
.ltabs .dm{margin:6px 6px 0 auto}
.topts{height:911px;border-left:2px solid #393939;border-right:1px solid #5c5c5c;padding:3px 3px 0 1px;display:flex;flex-direction:column;flex:none;letter-spacing:.15px}
.tt{font-weight:bold;height:14px;line-height:15px;letter-spacing:-.1px}
.fontrow{display:flex;height:36px}
.fontbtn{width:36px}
.fontbtn b{width:26px;height:26px;background:#fff;border:1px solid #000;color:#111;font:17px/24px "Open Sans",sans-serif;text-align:center;letter-spacing:-.5px}
.fcol{flex:1;margin-left:2px;display:flex;flex-direction:column;gap:2px}
.fcol span:first-child{line-height:15px;height:14px}
.fcol .entry{height:20px}
.r{display:flex;align-items:center;flex:none}
.r1{height:28px;margin-top:4px}
.lab{width:51px;letter-spacing:0}.l66{width:66px;white-space:nowrap}
.w78{width:78px}.px{width:51px;height:28px;margin-left:2px}
.topts .ck{height:21px;margin-left:2px}
.topts .r1+.ck{margin-top:3px}
.r2{height:28px;margin-top:3px}.c92{width:92px;height:28px;padding-left:10px}
.r3{height:33px;margin-top:2px}.colorbtn{width:92px;height:33px}.colorbtn b{width:82px;height:24px;background:#000}
.r4{height:24px;margin-top:2px}.jb{width:23px;height:23px;background:#1c1c1c}
.ji{display:flex;gap:10px;margin-left:5px}
.r5{height:21px;margin:2px 0 0 45px}.pi{width:18px;height:18px;margin-right:3px}
.ab{font-size:13px;line-height:10px;color:#bbb;letter-spacing:1px}
.w55{width:55px}
.r6{height:28px;margin-top:3px}.c103{width:103px;height:28px;padding-left:10px}
.lang{height:20px;line-height:21px}.pol{height:20px}
.lbar{height:26px;background:#3f3f3f;display:flex;align-items:center;gap:32.5px;padding:0 0 4px 18px;border-bottom:1px solid #666}
.gut{width:2px;position:relative}
.vdots{position:absolute;left:0;top:547px;width:2px;height:17px;background:repeating-linear-gradient(#bbb 0 4px,transparent 4px 7px)}

.center{width:1525px;border-left:1px solid #5c5c5c;border-bottom:1px solid #666;display:flex;flex-direction:column}
.imgtabs{height:59px;display:flex;align-items:flex-end;border-bottom:1px solid #5c5c5c;flex:none}
.itab{height:55px;width:57px;background:#222;display:flex;align-items:center;padding-left:4px}
.act{height:58px;width:85px;background:#3d3d3d;border:1px solid #5c5c5c;border-bottom:0;padding:0 0 2px 4px;gap:8px;margin-bottom:-1px}
.rulerrow{height:17px;display:flex}
.rcorner{margin:4px 0 0 4px}
.hruler{position:relative;margin-left:5px;width:1486px;height:17px;border-bottom:1px solid #e2e2e2;padding-left:41px;display:flex;overflow:hidden;font:10px/12px "Noto Sans",sans-serif;letter-spacing:-.3px;
background:repeating-linear-gradient(90deg,transparent 0 41px,#e2e2e2 41px 42px,transparent 42px 100px) 0 4px/1486px 13px no-repeat,
repeating-linear-gradient(90deg,transparent 0 1px,#e2e2e2 1px 2px,transparent 2px 20px) 0 11px/1486px 6px no-repeat,
repeating-linear-gradient(90deg,transparent 0 1px,#e2e2e2 1px 2px,transparent 2px 10px) 0 13px/1486px 4px no-repeat}
.hruler span{width:100px;flex:none;padding:1px 0 0 3px}
.hmark{position:absolute;left:880px;top:12px}
.zi{width:13px;height:13px;margin-top:3px}
.viewrow{display:flex;height:983px}
.vruler{width:17px;border-right:1px solid #e2e2e2;position:relative;padding:692px 0 0 1px;font:9px/9px "Noto Sans",sans-serif;margin-bottom:1px;
background:repeating-linear-gradient(transparent 0 92px,#e2e2e2 92px 93px,transparent 93px 100px) 4px 0/13px 100% no-repeat,
repeating-linear-gradient(transparent 0 12px,#e2e2e2 12px 13px,transparent 13px 20px) 11px 0/5px 100% no-repeat,
repeating-linear-gradient(transparent 0 2px,#e2e2e2 2px 3px,transparent 3px 10px) 13px 0/3px 100% no-repeat}
.vruler span{display:block;height:100px;padding:0 0 0 2px}
.vmark{position:absolute;left:11px;top:763px}
.canvas{width:1488px;position:relative;overflow:hidden}
.layer{position:absolute;left:244px;top:392px;width:1001px;height:202px;background:conic-gradient(#666 25%,#999 0 50%,#666 0 75%,#999 0) 0 0/16px 16px;overflow:hidden}
.layer:before{content:"";position:absolute;inset:0;background:repeating-linear-gradient(90deg,#ff0 0 4px,#000 4px 8px) 0 0/100% 1px no-repeat,repeating-linear-gradient(90deg,#ff0 0 4px,#000 4px 8px) 0 100%/100% 1px no-repeat,repeating-linear-gradient(#ff0 0 4px,#000 4px 8px) 100% 0/1px 100% no-repeat}
.layer span{position:absolute;right:23px;top:52px;font:italic 69px/94px "Noto Sans",sans-serif;color:#00f;letter-spacing:.3px}
.textbox{position:absolute;left:980px;top:610px;width:353px;height:66px;border:1px solid #b5b5b5;padding:3px 2px 3px 0;font-size:12px;color:#b4b4b4;display:flex;flex-direction:column;gap:2px}
.tb1,.tb2{display:flex;align-items:center;height:28px;justify-content:flex-end}
.textbox .btn{background:#333;border-color:#222}
.textbox .entry,.textbox .spin{background:#2b2b2b;border-color:#3c3c3c;height:23px}
.te{width:136px;padding-left:11px}.ts1{width:101px;margin-left:3px}.textbox .tpx{width:51px;height:28px;margin-left:1px;font-size:11px}
.ab1{width:21px;height:28px;margin-right:2px}
.ab1 b{width:13px;height:14px;background:#b4b4b0;color:#333;font:bold 10px/14px "DejaVu Sans",sans-serif;text-align:center}
.ab1 .it{font-style:italic}.ab1 .un{text-decoration:underline}.ab1 .st{text-decoration:line-through}
.ts2{width:62px;margin-right:2px}.first{margin-left:42px}
.textbox .spin>i{width:14px}
.tcol{width:28px;height:28px;margin-left:1px}.tcol b{width:20px;height:20px;background:#000}
.cross{position:absolute;left:993px;top:674px}
.vscroll{width:15px;padding-top:3px;height:983px}
.vscroll i{display:block;height:980px;background:#5b5b5b;border:1px solid #222;border-radius:1px}
.hrow{display:flex;height:18px;align-items:center;padding-left:3px}
.hscroll{height:15px;width:1489px;margin-left:5px;background:#5b5b5b;border:1px solid #222}
.nav{margin-left:1px}
.status{display:flex;align-items:center;height:32px;font:12px "Noto Sans",sans-serif}
.pos{width:79px;padding-left:18px;color:#929292;white-space:nowrap;letter-spacing:-.15px}
.s1{width:47px;height:29px;font-size:11px}.s2{width:29px;height:27px;font-size:10px;padding:0;color:#fff;letter-spacing:-.3px;white-space:nowrap;overflow:hidden;border-width:5px 1px}
.s3{width:18px;height:29px;margin:0 2px 0 1px}.s4{letter-spacing:-.38px}

.g2{width:2px}
.right{width:203px;border-left:1px solid #5c5c5c;display:flex;flex-direction:column}
.rtabs{height:23px;margin-top:2px}.rtabs .on,.rtabs2 .on{margin-top:0}
.rtabs i{width:21px;padding-right:1px}.rtabs .dm{margin:6px 6px 0 auto}
.rtabs .on{width:22px}
.pat{background:#ffc35c}.aa{font:9px "Open Sans",sans-serif}
.brushes{background:#3d3d3d;padding:3px 4px 0 3px;height:478px;border-bottom:1px solid #5c5c5c;flex:none}
.filt{height:18px;padding-right:4px}.filt em{font-style:italic;color:#777}
.filt .cv,.basic .cv{margin-left:auto;width:10px;height:7px}
.bname{font-style:italic;height:17px;line-height:18px;letter-spacing:.12px;white-space:nowrap}
.brow{display:flex;justify-content:space-between;height:377px}
.grid{display:grid;grid-template-columns:repeat(5,34px);grid-auto-rows:34px;background:#fff;width:170px;height:376px}
.grid canvas{display:block}
.bscroll{width:14px;background:#1f1f1f}.bscroll i{display:block;height:347px;background:#5b5b5b;border:1px solid #222}
.basic{height:20px;padding-right:4px;font-size:11.5px;border-width:1px;letter-spacing:.1px}
.slider{height:17px;border:1px solid #909090;display:flex;align-items:center;padding:0 2px 0 1px;font-size:11.5px}
.slider .v{margin-left:auto;margin-right:5px}
.od{background:linear-gradient(90deg,#5b5b5b 6px,#2e2e2e 6px)}
.kr{background:linear-gradient(90deg,#5b5b5b 183px,#000 183px 185px,#333 185px)}
.bicons{display:flex;align-items:center;gap:19.2px;padding-left:8px;height:26px;color:#bbb}
.hdots{width:18px;height:2px;margin:1px 0 0 91px;background:repeating-linear-gradient(90deg,#bbb 0 4px,transparent 4px 7px);flex:none}
.rtabs2{height:23px;margin-top:2px}.rtabs2 .dm{margin:6px 6px 0 auto}.rtabs2 .on{width:20px}.rtabs2 i{padding-right:2px}
.layers{background:#3d3d3d;padding:2px 3px 0 2px;height:580px;border-bottom:1px solid #666}
.mode{display:flex;gap:1px}.m1{width:153px;height:28px}.m1 em{margin-left:auto;margin-right:7px;letter-spacing:.2px}.m1 .cv{margin-left:0}.m2{width:43px;height:28px;gap:6px}
.kr{margin-top:1px}
.lock{height:24px;display:flex;align-items:center;gap:11px;color:#ddd;letter-spacing:.1px;font-size:11px}
.lock svg{color:#aaa}.lock svg:first-child{margin-left:-2px}
.llist{background:#303030;height:481px;border:1px solid #2a2a2a}
.lhead{display:flex;gap:2px;height:23px;background:#363636;padding-top:1px}
.lhead i{width:27px;background:#484848;display:flex;align-items:center;justify-content:center;color:#bbb}.lhead i:last-child{flex:1}
.lrow{height:28px;display:flex;align-items:center;font-size:11.5px}
.lrow i{width:75px;padding-left:4px;color:#ccc}.lrow.sel{background:#1f1f1f}
.th{width:36px;height:10px;border:2px solid #fff;margin-right:4px;overflow:hidden}.th.k{border-color:#000}
.licons{display:flex;align-items:center;gap:11.5px;padding:0 0 2px 4px;height:24px;color:#bbb}

.taskbar{height:40px;background:linear-gradient(90deg,#242a1b,#30301e 15%,#232a1c 30%,#20281a 60%,#252b1e);display:flex;flex:none;font-family:"Noto Sans",sans-serif;color:#fff;position:relative}
.taskbar>i{width:49px;display:flex;align-items:center;justify-content:center;position:relative}
.taskbar>.t50{width:48px}.taskbar>.t48{width:49px;padding-right:1px;margin-right:1px}
.run:after{content:"";position:absolute;left:4px;right:5px;bottom:0;height:2px;background:#76b9ed}
.run.two:after{background:linear-gradient(90deg,#76b9ed 31px,#4d7ba6 31px)}
.taskbar>.actv{background:#4d5148;width:47px;padding-left:2px}.taskbar>.actv:after{left:0;right:0}
.ws b{position:absolute;top:11px;font:bold 9px/12px "Liberation Sans",sans-serif}
.tray{margin-left:auto;display:flex;align-items:center;width:389px;position:relative}
.tray .one{position:absolute;left:16px;top:8px;font:10px/12px "Noto Sans",sans-serif}
.temp{font-size:13px;margin-left:8px;width:35px;letter-spacing:-.2px}.desc{font-size:13px;width:87px;white-space:nowrap;letter-spacing:0}
.tchev{margin-left:24px}.tcam{margin-left:14px}.tnet{margin-left:9px}.tvol{margin-left:7px}
.clock{width:56px;text-align:center;font-size:12px;line-height:18px;margin-left:17px;letter-spacing:-.45px;white-space:nowrap}
.tnot{margin-left:11px;margin-top:1px}.tray .cnt{position:absolute;right:28px;top:18px;font:12px/17px "Noto Sans",sans-serif}
.peek{width:1px;height:40px;background:#888;margin-left:auto;margin-right:4px}

.dlg{position:absolute;background:#454545;box-shadow:0 4px 14px rgba(0,0,0,.45),0 0 0 1px #3c3c3c;font-size:13px}
.d1{left:194px;top:133px;width:948px;height:674px;color:#a6a6a6}
.dtitle{height:30px;background:#fff;display:flex;align-items:center;padding:0 9px 0 8px;font:12px/16px "Noto Sans",sans-serif;color:#999;letter-spacing:-.38px}
.dtitle span{margin-left:3px;margin-bottom:1px}.dtitle .x{margin-left:auto;margin-bottom:2px}
.dbody{padding:10px 10px 0 10px}
.nrow,.prow{display:flex;align-items:center}
.nrow label,.prow label{width:127px;white-space:nowrap}
.name{width:801px;height:23px;background:#393939;color:#4c4c4c;line-height:22px;padding-left:4px}
.prow{height:31px;margin-top:12px}.prow .btn{height:31px;white-space:nowrap}
.p0{width:23px}.p1{width:89px;gap:6px}.p2{width:93px}.p3{width:136px}.p4{width:142px;font-weight:bold;letter-spacing:-.1px}.p5{width:108px;margin-left:auto}
.lists{display:flex;height:422px;margin-top:24px}
.placescol{width:148px;border-bottom:1px solid #666}.places{height:397px;background:#383838;border:1px solid #303030;border-top:0}
.th0,.fh .btn{height:28px;justify-content:flex-start;padding-left:4px}
.places .th0{padding-left:3px}
.places hr{margin:1px 1px 2px;border:0;border-top:1px solid #151515}
.fr{height:25px;display:flex;align-items:center;padding-left:2px;gap:4px;color:#686868;white-space:nowrap}
.fr svg{color:#999}
.pm{height:24px;background:linear-gradient(#202020,#303030);padding:7px 0 0 6px}
.pane{width:2px;position:relative}.pane .vdots{top:203px}
.files{width:595px;background:#383838;border:1px solid #303030;border-top:0}
.fh{display:flex}.files .h1{width:415px;padding-left:5px}.h1 .cv{margin-left:auto;margin-right:5px;color:#eee}.h2{width:64px}.h3{width:114px}
.f{padding-left:2px}.f .n{width:396px}.f .s{width:60px}
.fscroll{width:15px;background:#5b5b5b;border:1px solid #222}
.preview{width:156px;margin-left:auto;background:#303030}.preview>svg{margin:34px 0 0 46px}
.ck.c1{margin:15px 0 0 2px;height:15px;letter-spacing:.1px}.ck.c2{margin:10px 0 0 2px;height:15px;letter-spacing:-.05px}
.help{width:100px;height:27px;margin:22px 0 0 7px;color:#ccc}
.d2{left:678px;top:423px;width:580px;height:384px;color:#dcdcdc}
.d2 .dtitle{color:#111;padding:0 9px 0 8px}.d2 .dtitle span{margin-left:3px}
.gbody{padding:12px 13px 0 12px}
.gbody h4{font-size:13px;margin:0 0 0 4px;height:17px;line-height:17px;letter-spacing:.05px}
.gbody .g{height:18px;margin-left:15px;color:#c8c8c8}.gbody .g.dim{color:#8f8f8f}
.comm{display:flex;justify-content:space-between;height:53px;padding-top:7px}
.tview{width:224px;height:47px;background:#303030;padding:1px;line-height:17px}
.gbody .comm+.g{height:32px}
.gbody .h2nd{margin-top:7px;letter-spacing:.25px}
.drow{display:flex;align-items:center;padding-left:13px}
.dr1{height:23px;margin-top:7px}.dl1{width:307px;white-space:nowrap;letter-spacing:.04px}.ds{width:63px;height:23px;color:#eee}.ds b{width:1px;height:15px;background:#eee}.ds>i{width:14px}.ms{margin-left:6px}
.dr2{height:31px;margin-top:6px}.dl2{width:245px;white-space:nowrap;letter-spacing:.05px}.dcombo{width:297px;height:31px}
.gbody .u1{margin-top:6px}.gbody .u2{margin-top:7px}
.u1,.u2{letter-spacing:.06px}
.dbtns{display:flex;gap:6px;margin:26px -1px 0 0}.dbtns .btn{width:100px;height:27px}.dbtns .btn:first-child{margin-right:auto}
```
FILE: script.js
```js
// Brush previews for the brush grid: each cell is a 34px tile drawn from a short recipe.
let seed = 7;
const rnd = () => (seed = (seed * 16807) % 2147483647) / 2147483647;
const g = (a) => `rgba(0,0,0,${a})`;

function soft(c, r, core, rx = 1, ry = 1, col = '0,0,0') {
  c.save(); c.translate(17, 17); c.scale(rx, ry);
  const q = c.createRadialGradient(0, 0, r * core, 0, 0, r);
  q.addColorStop(0, `rgba(${col},1)`); q.addColorStop(1, `rgba(${col},0)`);
  c.fillStyle = q; c.beginPath(); c.arc(0, 0, r, 0, 7); c.fill(); c.restore();
}
function splat(c, n, rx, ry, a, s = 1.5) {
  for (let i = 0; i < n; i++) {
    const t = rnd() * 6.28, d = (rnd() + rnd() + rnd()) / 2.3;
    const lump = 0.75 + 0.25 * Math.sin(t * 5 + rx) * Math.cos(t * 3);
    c.fillStyle = g(a * (0.25 + rnd() * 0.6));
    const z = s * (0.5 + rnd() * 0.7);
    c.fillRect(16 + Math.cos(t) * d * rx * lump * 1.15, 16 + Math.sin(t) * d * ry * lump * 1.15, z, z);
  }
}
function noise(c, r, n, a) {
  for (let i = 0; i < n; i++) {
    const t = rnd() * 6.28, d = Math.sqrt(rnd()) * r;
    c.fillStyle = g(a * (0.4 + rnd() * 0.6)); c.fillRect(17 + Math.cos(t) * d | 0, 16 + Math.sin(t) * d | 0, 1, 1);
  }
}
function cells(c, r, ry, a) {
  c.strokeStyle = g(a); c.lineWidth = 0.9;
  for (let y = -ry; y <= ry; y += 4.2) for (let x = -r; x <= r; x += 4.2) {
    if ((x * x) / (r * r) + (y * y) / (ry * ry) > 1.05) continue;
    c.beginPath();
    const o = rnd() * 2;
    for (let k = 0; k < 5; k++) c.lineTo(16 + x + Math.cos(o + k * 1.257) * (2 + rnd()), 16 + y + Math.sin(o + k * 1.257) * (2 + rnd()));
    c.closePath(); c.stroke();
  }
}
function sticks(c, n, len, w, a, burst) {
  c.lineWidth = w; c.strokeStyle = g(a);
  for (let i = 0; i < n; i++) {
    const t = rnd() * 6.28, x = burst ? 16 + Math.cos(t) * 2 : 5 + rnd() * 24, y = burst ? 16 + Math.sin(t) * 2 : 4 + rnd() * 24;
    const l = burst ? len * (0.6 + rnd() * 0.7) : len;
    c.beginPath(); c.moveTo(x, y); c.lineTo(x + Math.cos(t) * l, y + Math.sin(t) * l); c.stroke();
  }
}
function dots(c, n, s, a = 0.9, w = 13) {
  for (let i = 0; i < n; i++) { c.fillStyle = g(a); c.beginPath(); c.arc(17 + (rnd() - .5) * 2 * w, 5 + rnd() * 24, s * (0.4 + rnd() * .7), 0, 7); c.fill(); }
}
function sketch(c, a) {
  c.strokeStyle = g(a); c.lineWidth = 1;
  for (let i = 0; i < 6; i++) { const x = 6 + i * 4; c.beginPath(); c.moveTo(x, 7 + rnd() * 5); c.quadraticCurveTo(x + rnd() * 6 - 3, 17, x + rnd() * 4 - 2, 28); c.stroke(); }
}
function lines(c, diag) {
  c.strokeStyle = '#222'; c.lineWidth = diag ? 1.3 : 1;
  for (let i = 0; i < (diag ? 5 : 7); i++) {
    c.beginPath();
    if (diag) { c.moveTo(4 + i * 3, 14 - i * 2.5); c.lineTo(20 + i * 2.5, 27 - i * 2); }
    else { c.moveTo(5, 3.5 + i * 4); c.lineTo(30, 3.5 + i * 4 + rnd() - .5); }
    c.stroke();
  }
}
const star = (c) => { c.fillStyle = '#000'; c.beginPath(); [[9,2],[17,9],[26,4],[24,14],[31,18],[22,20],[18,29],[13,20],[4,19],[12,13]].forEach(p => c.lineTo(...p)); c.fill(); };
const none = () => {};
const recipes = [
  [none], [none], [c => { c.fillStyle = '#222'; c.fillRect(15, 15, 3, 3); }, 'b1'], [c => { c.fillRect(3, 13, 29, 7); }, 'b'], [c => soft(c, 14, .3, 1, .42), 'b'],
  [c => { c.fillRect(3, 16, 29, 1); }, 'b'], [c => soft(c, 11, .05), 'b'], [c => soft(c, 12, .15), 'b'], [c => soft(c, 13, .55), 'b'], [c => { c.beginPath(); c.arc(17, 17, 15.7, 0, 7); c.fill(); }, 'b'],
  [star, 'b'], [c => splat(c, 620, 12, 12, .8), 'r'], [c => splat(c, 260, 14, 11, .8), 'r'], [c => splat(c, 280, 9, 15, .6), 'r'], [c => { soft(c, 11, 0, 1, 1, '110,110,110'); splat(c, 260, 11, 13, .3); }, 'r'],
  [c => splat(c, 760, 15, 16, .7), 'r'], [c => { c.strokeStyle = '#aaa'; c.lineWidth = 2.5; c.beginPath(); c.moveTo(8, 4); c.lineTo(11, 10); c.stroke(); }, 'r1'], [c => dots(c, 10, 1.5), 'k'], [c => dots(c, 26, 2), 'k'], [c => dots(c, 22, .8)],
  [c => cells(c, 13, 13, .35), 'k'], [c => cells(c, 15, 15, .75), 'k'], [c => splat(c, 560, 18, 18, .8), 'r'], [c => noise(c, 15, 520, .9), 'r'], [c => { soft(c, 14, .8, 1, 1, '130,130,130'); splat(c, 360, 14, 14, .8, 2); }, 'r'],
  [c => cells(c, 14, 8, .8), 'k'], [c => { c.fillStyle = '#b0b0b0'; c.fillRect(4, 7, 24, 17); splat(c, 240, 14, 9, .35); }, 'k'], [c => dots(c, 40, .8, .5, 3), 'r'], [c => sticks(c, 14, 6, 2, .45), 'k'], [c => { c.strokeStyle = '#999'; c.beginPath(); [[3,5],[8,12],[30,13],[29,27],[26,20],[12,20],[10,28],[7,17],[2,15],[7,10],[10,4]].forEach(p => c.lineTo(...p)); c.stroke(); }, 'r'],
  [c => noise(c, 16, 620, .5), 'r'], [c => splat(c, 720, 14, 15, .75), 'r'], [c => lines(c), 'r'], [c => splat(c, 300, 17, 17, .55, 2.5), 'k'], [c => { noise(c, 14, 120, .3); c.translate(-2, -7); splat(c, 120, 7, 7, .8, 2); c.translate(5, 5); splat(c, 60, 8, 5, .6, 2); }, 'k'],
  [c => noise(c, 13, 140, .5), 'k'], [c => splat(c, 200, 5, 14, .4, 2), 'r'], [c => dots(c, 14, 1.7, .9, 2), 'r'], [c => splat(c, 460, 5, 18, .9, 2), 'r1'], [c => lines(c, 1), 'k'],
  [c => { c.fillRect(16, 16, 1, 1); }], [c => { soft(c, 14, .3, 1, 1, '150,150,150'); splat(c, 150, 14, 14, .25, 2); }, 'k'], [c => { soft(c, 14, .5, 1, 1, '255,170,120'); soft(c, 9, .7, 1, 1, '255,235,60'); soft(c, 4, .1, 1, 1, '255,250,150'); }, 'r'], [c => dots(c, 26, 1.6), 'r'], [c => { dots(c, 26, 1.1); splat(c, 80, 9, 9, .8); }, 'r'],
  [c => noise(c, 16, 620, .55), 'k'], [c => splat(c, 500, 17, 17, .35, 2), 'k'], [c => sketch(c, .22), 'r'], [c => splat(c, 380, 15, 16, .4, 2.5), 'k'], [c => splat(c, 260, 14, 14, .6, 2), 'k'],
  [c => { c.translate(-5, 0); splat(c, 260, 6, 17, .8, 2); c.translate(13, 0); splat(c, 150, 7, 16, .7, 2); }, 'r'], [c => sketch(c, .2), 'r'], [c => { soft(c, 13, .7, 1, 1, '160,160,160'); splat(c, 240, 14, 14, .3, 2); }, 'r'], [c => sticks(c, 22, 11, 1.6, .5, true), 'k'], [c => { c.translate(0, 2); splat(c, 380, 17, 13, .45, 2); }, 'r'],
];
const grid = document.getElementById('grid');
recipes.forEach(([draw, mark], i) => {
  const cv = document.createElement('canvas'); cv.width = cv.height = 34;
  const c = cv.getContext('2d');
  c.save(); draw(c); c.restore();
  if (i === 7) { c.strokeStyle = '#000'; c.lineWidth = 1; c.strokeRect(.5, .5, 33, 33); }
  if (mark) {
    c.fillStyle = mark[0] === 'b' ? '#7b8ff0' : mark[0] === 'r' ? '#f08080' : 'transparent';
    c.beginPath(); c.moveTo(33, 28); c.lineTo(33, 33); c.lineTo(28, 33); c.fill();
    if (!mark[1]) { c.fillStyle = '#000'; c.fillRect(28, 30, 5, 1); c.fillRect(30, 28, 1, 5); }
  }
  grid.appendChild(cv);
});
```
